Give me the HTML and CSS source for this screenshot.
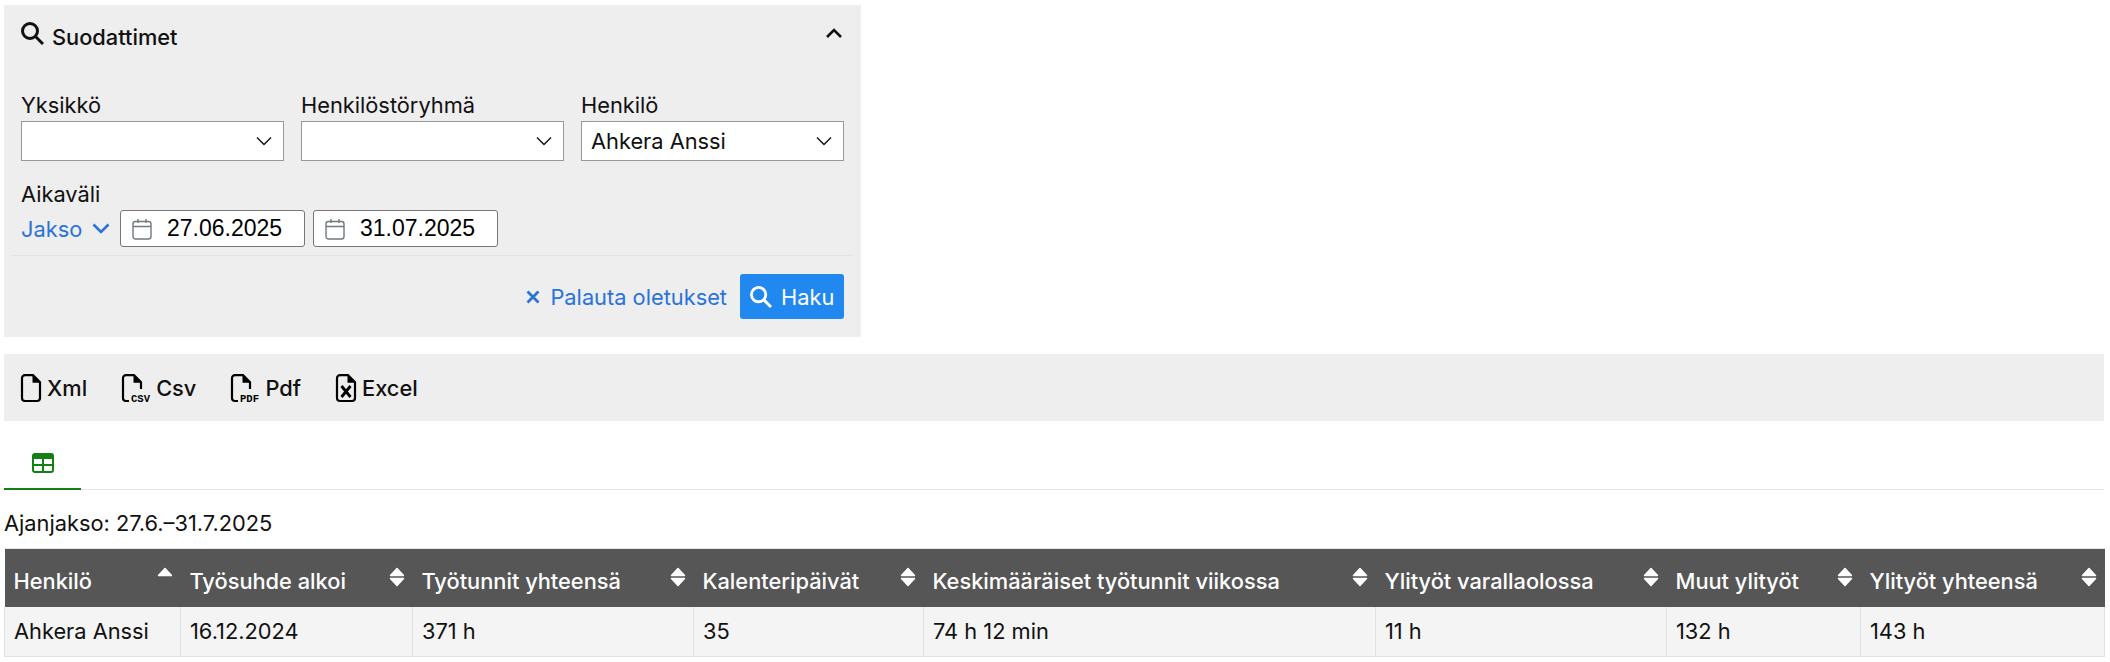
FILE: index.html
```html
<!DOCTYPE html>
<html lang="fi">
  <head>
    <meta charset="UTF-8" />
    <title>Raportti</title>
    <link rel="stylesheet" href="styles.css">
  </head>
  <body>
    <section class="filters">
      <div class="filters-head">
        <svg class="icon-search" viewBox="0.5 0.5 23 23"><circle cx="9.500" cy="9.500" r="7.500"/><path d="M15 15l7.500 7.500"/></svg>
        <span class="filters-title">Suodattimet</span>
        <svg class="icon-collapse" viewBox="0 0 18 12"><path d="M2 10 9 3l7 7"/></svg>
      </div>

      <div class="select-row">
        <div class="field">
          <label>Yksikkö</label>
          <div class="select"><span></span><svg viewBox="0 0 16 10"><path d="M1 1.5 8 8.5l7-7"/></svg></div>
        </div>
        <div class="field">
          <label>Henkilöstöryhmä</label>
          <div class="select"><span></span><svg viewBox="0 0 16 10"><path d="M1 1.5 8 8.5l7-7"/></svg></div>
        </div>
        <div class="field">
          <label>Henkilö</label>
          <div class="select"><span>Ahkera Anssi</span><svg viewBox="0 0 16 10"><path d="M1 1.5 8 8.5l7-7"/></svg></div>
        </div>
      </div>

      <div class="range">
        <label>Aikaväli</label>
        <div class="range-row">
          <a class="period">Jakso <svg viewBox="0 0 18 11"><path d="M1.500 1.500 9 9l7.500-7.500"/></svg></a>
          <div class="date">
            <svg viewBox="0 0 20 22"><rect x="1" y="3.5" width="18" height="17.500" rx="2.500"/><path d="M1 8.500h18M6 1v4M14 1v4"/></svg>
            <span>27.06.2025</span>
          </div>
          <div class="date">
            <svg viewBox="0 0 20 22"><rect x="1" y="3.5" width="18" height="17.500" rx="2.500"/><path d="M1 8.500h18M6 1v4M14 1v4"/></svg>
            <span>31.07.2025</span>
          </div>
        </div>
      </div>

      <div class="filters-actions">
        <a class="reset"><svg viewBox="0 0 14 14"><path d="M1.5 1.5l11 11M12.5 1.5l-11 11"/></svg>Palauta oletukset</a>
        <button class="search-btn"><svg viewBox="0.5 0.5 23 23"><circle cx="9.500" cy="9.500" r="7.500"/><path d="M15 15l7.500 7.500"/></svg>Haku</button>
      </div>
    </section>

    <nav class="exports">
      <a><svg class="doc" viewBox="0 0 20 28"><path d="M4 1.200h8l7 7V24a3 3 0 0 1-3 3H4a3 3 0 0 1-3-3V4.200a3 3 0 0 1 3-3z"/><path class="fill" d="M11.500 1.200l7.500 7.500h-7.500z"/></svg>Xml</a>
      <a><svg class="doc doc-wide" viewBox="0 0 28 28"><path d="M7 27H4a3 3 0 0 1-3-3V4.200a3 3 0 0 1 3-3h8l7 7V15"/><path class="fill" d="M11.500 1.200l7.500 7.500h-7.500z"/><text x="9" y="27.500" textLength="19" lengthAdjust="spacingAndGlyphs">CSV</text></svg>Csv</a>
      <a><svg class="doc doc-wide" viewBox="0 0 28 28"><path d="M7 27H4a3 3 0 0 1-3-3V4.200a3 3 0 0 1 3-3h8l7 7V15"/><path class="fill" d="M11.500 1.200l7.500 7.500h-7.500z"/><text x="9" y="27.500" textLength="19" lengthAdjust="spacingAndGlyphs">PDF</text></svg>Pdf</a>
      <a><svg class="doc" viewBox="0 0 20 28"><path d="M4 1.200h8l7 7V24a3 3 0 0 1-3 3H4a3 3 0 0 1-3-3V4.200a3 3 0 0 1 3-3z"/><path class="fill" d="M11.500 1.200l7.500 7.500h-7.500z"/><path class="x-mark" d="M5.500 12l9 11M14.500 12l-9 11"/></svg>Excel</a>
    </nav>

    <div class="tabs">
      <div class="tab active">
        <svg viewBox="0 0 22 20"><rect x="1" y="1" width="20" height="18" rx="2"/><path class="head" d="M1 3a2 2 0 0 1 2-2h16a2 2 0 0 1 2 2v3H1z"/><path d="M1 12h20M11 6v13"/></svg>
      </div>
    </div>

    <p class="period-text">Ajanjakso: 27.6.–31.7.2025</p>

    <svg class="defs" width="0" height="0">
      <symbol id="sort-up" viewBox="0 0 16 20"><path d="M8 1.500 14.500 8.500h-13z"/></symbol>
      <symbol id="sort-both" viewBox="0 0 16 20"><path d="M8 1.500 14.500 8.500h-13zM1.500 11.500h13L8 18.500z"/></symbol>
    </svg>

    <table class="report">
      <colgroup>
        <col class="c1"><col class="c2"><col class="c3"><col class="c4"><col class="c5"><col class="c6"><col class="c7"><col class="c8">
      </colgroup>
      <thead>
        <tr>
          <th>Henkilö<svg class="sort"><use href="#sort-up"/></svg></th>
          <th>Työsuhde alkoi<svg class="sort"><use href="#sort-both"/></svg></th>
          <th>Työtunnit yhteensä<svg class="sort"><use href="#sort-both"/></svg></th>
          <th>Kalenteripäivät<svg class="sort"><use href="#sort-both"/></svg></th>
          <th>Keskimääräiset työtunnit viikossa<svg class="sort"><use href="#sort-both"/></svg></th>
          <th>Ylityöt varallaolossa<svg class="sort"><use href="#sort-both"/></svg></th>
          <th>Muut ylityöt<svg class="sort"><use href="#sort-both"/></svg></th>
          <th>Ylityöt yhteensä<svg class="sort"><use href="#sort-both"/></svg></th>
        </tr>
      </thead>
      <tbody>
        <tr>
          <td>Ahkera Anssi</td>
          <td>16.12.2024</td>
          <td>371 h</td>
          <td>35</td>
          <td>74 h 12 min</td>
          <td>11 h</td>
          <td>132 h</td>
          <td>143 h</td>
        </tr>
      </tbody>
    </table>
  </body>
</html>
```

FILE: styles.css
```css
body {
  margin: 0;
  padding: 5px 6px 0 4px;
  font-family: Inter, "Liberation Sans", sans-serif;
  font-size: 21.8px;
  color: #111;
  background-color: #fff;
}

svg {
  fill: none;
  stroke: currentColor;
}

/* Filters panel */
.filters {
  width: 857px;
  height: 332px;
  box-sizing: border-box;
  background-color: #eee;
  padding: 0 17px;
}

.filters-head {
  display: flex;
  align-items: center;
  height: 64px;
}

.icon-search {
  width: 23px;
  height: 23px;
  stroke-width: 3;
  margin-top: -7px;
  margin-right: 8px;
}

.filters-title {
  font-weight: 500;
  flex: 1;
}

.icon-collapse {
  width: 18px;
  height: 12px;
  stroke-width: 2.6;
  margin-right: 1px;
  margin-top: -8px;
}

.select-row {
  display: flex;
  gap: 17px;
  margin-top: 22px;
}

.field {
  width: 263px;
}

label {
  display: block;
  line-height: 28px;
  margin-bottom: 2px;
}

.select {
  display: flex;
  align-items: center;
  justify-content: space-between;
  height: 40px;
  box-sizing: border-box;
  border: 1px solid #999;
  background-color: #fff;
  padding: 0 11px 0 9px;
}

.select svg {
  width: 16px;
  height: 10px;
  stroke-width: 1.4;
}

.range {
  margin-top: 19px;
}

.range-row {
  display: flex;
  align-items: center;
  gap: 8px;
}

.period {
  display: flex;
  align-items: center;
  gap: 10px;
  width: 91px;
  color: #2b73d9;
}

.period svg {
  width: 18px;
  height: 11px;
  stroke-width: 2.6;
}

.date {
  display: flex;
  align-items: center;
  gap: 15px;
  width: 185px;
  height: 37px;
  box-sizing: border-box;
  border: 1px solid #777;
  border-radius: 3px;
  background-color: #fff;
  padding-left: 11px;
  color: #000;
  font-family: "Liberation Sans", sans-serif;
  font-size: 23px;
}

.date svg {
  width: 20px;
  height: 22px;
  stroke: #6f7a80;
  stroke-width: 1.4;
}

.filters-actions {
  display: flex;
  justify-content: flex-end;
  align-items: center;
  gap: 13px;
  margin: 8px -9px 0;
  padding: 18px 9px 0;
  border-top: 1px solid #e3e3e3;
}

.reset {
  display: flex;
  align-items: center;
  gap: 10px;
  color: #2b73d9;
}

.reset svg {
  width: 14px;
  height: 14px;
  stroke-width: 2.8;
}

.search-btn {
  display: flex;
  align-items: center;
  gap: 9px;
  width: 104px;
  height: 45px;
  padding: 0 10px;
  border: none;
  border-radius: 3px;
  background-color: #2188f0;
  color: #fff;
  font-family: inherit;
  font-size: 21.8px;
}

.search-btn svg {
  width: 22px;
  height: 22px;
  stroke-width: 3;
  flex-shrink: 0;
}

/* Export toolbar */
.exports {
  display: flex;
  align-items: center;
  gap: 35px;
  height: 67px;
  margin-top: 17px;
  padding: 0 17px;
  background-color: #eee;
  font-weight: 500;
}

.exports a {
  display: flex;
  align-items: center;
  gap: 6px;
}

.doc {
  width: 20px;
  height: 28px;
  stroke: #000;
  stroke-width: 2.2;
  overflow: visible;
}

.doc-wide {
  width: 28px;
}

.doc .fill {
  fill: #000;
  stroke: none;
}

.doc .x-mark {
  stroke-width: 2.8;
}

.doc text {
  fill: #000;
  stroke: none;
  font-family: "Liberation Mono", monospace;
  font-size: 11px;
  font-weight: 700;
}

/* Tabs */
.tabs {
  height: 69px;
  box-sizing: border-box;
  border-bottom: 1px solid #e6e6e6;
}

.tab {
  display: flex;
  align-items: center;
  justify-content: center;
  width: 77px;
  height: 69px;
  box-sizing: border-box;
  padding-top: 16px;
  border-bottom: 2px solid #128012;
  color: #128012;
}

.tab svg {
  width: 22px;
  height: 20px;
  stroke-width: 2;
}

.tab .head {
  fill: currentColor;
  stroke: none;
}

.period-text {
  margin: 18px 0 10px;
  line-height: 30px;
}

.defs {
  display: block;
}

/* Report table */
.report {
  border-collapse: collapse;
  table-layout: fixed;
  width: 2100px;
}

.c1 { width: 176px; }
.c2 { width: 232px; }
.c3 { width: 281px; }
.c4 { width: 230px; }
.c5 { width: 452px; }
.c6 { width: 291px; }
.c7 { width: 194px; }
.c8 { width: 244px; }

.report th {
  position: relative;
  height: 58px;
  padding: 6px 9px 0;
  box-sizing: border-box;
  background-color: #565656;
  color: #fff;
  font-weight: 500;
  text-align: left;
  white-space: nowrap;
  border-top: 1px solid #e6e6e6;
}

.report td {
  height: 49px;
  padding: 0 9px;
  background-color: #f4f4f4;
  border: 1px solid #e2e2e2;
  border-top: none;
}

.sort {
  position: absolute;
  top: 18px;
  right: 8px;
  width: 16px;
  height: 20px;
  fill: #fff;
  stroke: #fff;
  stroke-width: 1.5;
  stroke-linejoin: round;
}
```
